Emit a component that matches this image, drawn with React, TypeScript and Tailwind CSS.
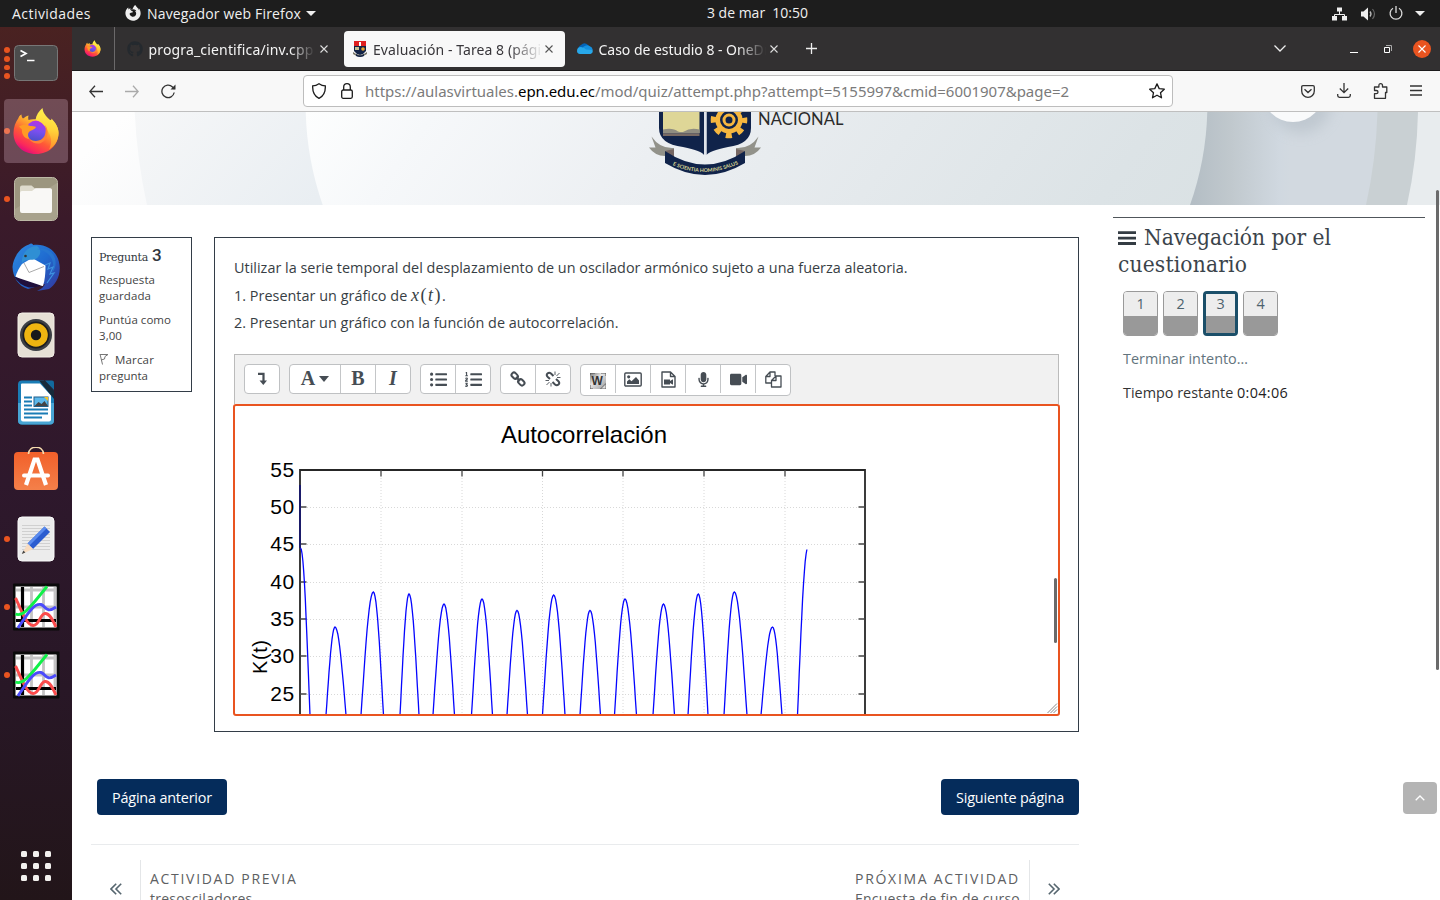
import { useLayoutEffect, useRef, type ReactNode } from "react";
import { FaFirefoxBrowser, FaGithub, FaListUl, FaListOl, FaMicrophone, FaVideo } from "react-icons/fa";

/* Text run tracked so that it spans exactly w pixels. */
function Fit({ w, className = "", children }: { w: number; className?: string; children: ReactNode }) {
  const ref = useRef<HTMLSpanElement>(null);
  useLayoutEffect(() => {
    const el = ref.current;
    if (!el) return;
    el.style.letterSpacing = "0px";
    const n = (el.textContent || "").length;
    el.style.letterSpacing = `${(w - el.getBoundingClientRect().width) / n}px`;
  }, [w]);
  return (
    <span ref={ref} className={`inline-block whitespace-pre ${className}`}>
      {children}
    </span>
  );
}

function FirefoxLogo({ size, id }: { size: number; id: string }) {
  return (
    <svg width={size} height={size} viewBox="0 0 48 48">
      <defs>
        <linearGradient id={`${id}a`} x1="0.8" y1="0.1" x2="0.25" y2="0.95">
          <stop offset="0" stopColor="#fff44f" />
          <stop offset="0.3" stopColor="#ffb02e" />
          <stop offset="0.6" stopColor="#ff5a36" />
          <stop offset="0.85" stopColor="#fb2a5a" />
          <stop offset="1" stopColor="#e00b7e" />
        </linearGradient>
        <linearGradient id={`${id}b`} x1="0.6" y1="0" x2="0.4" y2="1">
          <stop offset="0" stopColor="#b833e1" />
          <stop offset="0.5" stopColor="#7a4ff0" />
          <stop offset="1" stopColor="#4a50c8" />
        </linearGradient>
        <linearGradient id={`${id}c`} x1="0.5" y1="0" x2="0.4" y2="1">
          <stop offset="0" stopColor="#fff44f" />
          <stop offset="0.5" stopColor="#ffd43a" />
          <stop offset="1" stopColor="#ff8a2a" />
        </linearGradient>
      </defs>
      <path d="M24 47C10.500 47 1.500 37.500 1.500 26C1.500 20 3.500 15 6.500 11C6.500 10 7.500 8.500 9.500 7.500C9.500 9.500 10 10.500 11 11.500C12.500 10.500 14.500 9 16.500 8.500C16 10 16 11.500 16.500 13C20 11.500 26 12 30 14L40 13C43 16 46.500 20 46.500 26C46.500 37.500 37.500 47 24 47Z" fill={`url(#${id}a)`} />
      <circle cx="24.500" cy="24" r="10.500" fill={`url(#${id}b)`} />
      <path d="M23.500 13C24 8 27 4 30.500 1C31 6 34 9 37.500 12.500C38.500 13.500 39.500 13.500 39.500 11.500C43 15 46.500 20 46.500 26C46.500 33 43 39 37 42.500C41 35 39 28 34.500 22C32 17 28 14 23.500 13Z" fill={`url(#${id}c)`} />
      <path d="M7 19.500C11 17 15 17.500 18 19C20.500 19 22.500 19 24 20C22.500 23 19.500 23 17.500 24.500C15.500 26 15.500 30 18 32C11.500 32 9.500 26 10 22.500Z" fill="#ff9b25" />
      <path d="M33 18C37 23 37 32 29 36C25 37.500 20 36 17 32C23 35.500 30 34 32.500 29C34 25.500 34 21 33 18Z" fill="#ff8236" />
    </svg>
  );
}

function GnuplotIcon() {
  return (
    <svg width="48" height="48" viewBox="0 0 48 48">
      <rect x="1" y="0.500" width="46.500" height="47" rx="1" fill="#0a0a0a" />
      <rect x="3.500" y="3.500" width="41" height="41" fill="#fff" />
      <path d="M4 7h40M4 24h40M19.500 4v40M31.500 4v40M43 4v40" stroke="#c4c4c4" strokeWidth="2.800" />
      <path d="M4 37.500h40M10.500 4v40" stroke="#000" strokeWidth="3.200" />
      <path d="M3.500 15C9 26 14 42 21 42.500C27 43 28 31 33 30.500C38 30 41 38 44 44" fill="none" stroke="#fb4b4b" strokeWidth="2.900" />
      <path d="M3.500 31C12 35 22 19 35 3.500" fill="none" stroke="#10f048" strokeWidth="2.900" />
      <path d="M6 45C16 30 22 20 29 21.500C34 23 34 31 44 24" fill="none" stroke="#4b4bfb" strokeWidth="2.900" />
    </svg>
  );
}

const dock: { name: string; dots: number; active?: boolean; icon: ReactNode }[] = [
  {
    name: "Terminal", dots: 4,
    icon: (
      <svg width="48" height="48" viewBox="0 0 48 48">
        <rect x="2.500" y="6.500" width="43" height="35" rx="4" fill="#4c4c4c" stroke="#777" />
        <path d="M8.500 11.500l5.500 3-5.500 3" fill="none" stroke="#fff" strokeWidth="1.700" />
        <path d="M15 21.500h7.500" stroke="#fff" strokeWidth="1.500" />
      </svg>
    ),
  },
  { name: "Firefox", dots: 1, active: true, icon: <FirefoxLogo size={48} id="ffdock" /> },
  {
    name: "Archivos", dots: 1,
    icon: (
      <svg width="48" height="48" viewBox="0 0 48 48">
        <rect x="2.500" y="2.500" width="43" height="43" rx="5" fill="#9c967f" stroke="#bdb9a6" />
        <path d="M3 34L45 8V40a5 5 0 0 1-5 5H8a5 5 0 0 1-5-5z" fill="#a8a28c" />
        <path d="M8 15v-2.500a2 2 0 0 1 2-2h9.500l3.500 3h15a2 2 0 0 1 2 2V20H8z" fill="#dedbcd" />
        <path d="M8 18a2 2 0 0 1 2-2h10l3.500-2.700h14.500a2 2 0 0 1 2 2V36a2 2 0 0 1-2 2H10a2 2 0 0 1-2-2z" fill="#f9f8f6" />
      </svg>
    ),
  },
  {
    name: "Thunderbird", dots: 0,
    icon: (
      <svg width="48" height="48" viewBox="0 0 48 48">
        <defs>
          <linearGradient id="tb" x1="0" y1="0" x2="1" y2="1">
            <stop offset="0" stopColor="#2f8ae0" />
            <stop offset="0.5" stopColor="#1f6bd0" />
            <stop offset="1" stopColor="#35359c" />
          </linearGradient>
        </defs>
        <path d="M0.500 24C1 15 8 4 17 1.500C19 -0.500 21 0.500 21 2C34 0 46 8 47.500 22C49 33 43 42 37 46L25 48C29 46 32 44 33 41L16 46C6 43 1 34 0.500 24Z" fill="url(#tb)" />
        <path d="M10 21L20 15L33.500 22.500C33.500 30 33 37 31 43C24 42 10 38 3.500 33.500C5 29 7 25 10 21Z" fill="#fff" />
        <path d="M2 33.500L29 42.500Q24 45 17 44.500Q7 42 2 33.500Z" fill="#20103c" />
        <path d="M12 20l5 9.500 15-6" fill="none" stroke="#aaa" />
        <path d="M10 20C9 11 16 3 25 3C31 7 28 15 22 16.500C18 17 13 16 10 20Z" fill="#2f8fd4" />
        <path d="M25 6C38 8 44 18 40 30C45 24 45 15 39 9Q33 4 25 6Z" fill="#2878cf" opacity="0.800" />
        <path d="M33 22l5-2-2 6 5-2-3 7 4-1-7 10" fill="none" stroke="#3e93e0" strokeWidth="1.200" />
        <circle cx="13.500" cy="13" r="1.300" fill="#333" />
      </svg>
    ),
  },
  {
    name: "Rhythmbox", dots: 0,
    icon: (
      <svg width="48" height="48" viewBox="0 0 48 48">
        <rect x="6" y="2" width="36" height="44" rx="4" fill="#e6e0d5" stroke="#f3efe7" />
        <circle cx="24" cy="24" r="16" fill="#3c3f44" />
        <circle cx="24" cy="24" r="13.500" fill="#1d1e20" />
        <circle cx="24" cy="24" r="11.800" fill="#eeb511" />
        <circle cx="24" cy="24" r="5.200" fill="#17191b" />
      </svg>
    ),
  },
  {
    name: "Writer", dots: 0,
    icon: (
      <svg width="48" height="48" viewBox="0 0 48 48">
        <path d="M10 1.500h22l10 11v29a4 4 0 0 1-4 4H10a4 4 0 0 1-4-4V5.500a4 4 0 0 1 4-4z" fill="#1a7cb5" />
        <path d="M6 24h36v17.500a4 4 0 0 1-4 4H10a4 4 0 0 1-4-4z" fill="#48a5d4" />
        <path d="M10 4.500h18l11 12v24a2 2 0 0 1-2 2H11a2 2 0 0 1-2-2v-35a1 1 0 0 1 1-1z" fill="#fff" />
        <path d="M27 1.500h6L42 12v8z" fill="#172a3a" />
        <path d="M33 1.500h7a2 2 0 0 1 2 2V11z" fill="#126a9f" />
        <path d="M12 18.500h8M12 22.500h8M12 26.500h8M12 30.500h24M12 34.500h24M12 38.500h18" stroke="#1a7cb5" strokeWidth="1.800" />
        <rect x="22" y="18" width="14" height="9.500" fill="#5cb8ea" stroke="#1e5f8a" />
        <path d="M22.500 27l4-4 3 2 3-3 3.500 5z" fill="#444" />
        <path d="M32 18h4v4z" fill="#f5c324" />
      </svg>
    ),
  },
  {
    name: "Software", dots: 0,
    icon: (
      <svg width="48" height="48" viewBox="0 2 48 48">
        <defs>
          <linearGradient id="sw" x1="0" y1="0" x2="0" y2="1">
            <stop offset="0" stopColor="#f2602a" />
            <stop offset="1" stopColor="#f4804a" />
          </linearGradient>
        </defs>
        <rect x="2" y="7" width="44" height="38" rx="4" fill="url(#sw)" />
        <path d="M16.500 9C17 0 31 0 31.500 9" fill="none" stroke="#f6dcae" strokeWidth="1.700" />
        <path d="M14 40L22.500 14.500h3L34 40" fill="none" stroke="#fff" strokeWidth="4.200" />
        <path d="M12 30.500h24" stroke="#fff" strokeWidth="4" strokeLinecap="round" />
      </svg>
    ),
  },
  {
    name: "Editor de textos", dots: 1,
    icon: (
      <svg width="48" height="48" viewBox="0 0 48 48">
        <rect x="6" y="2" width="36" height="44" rx="4" fill="#ececec" stroke="#fafafa" />
        <path d="M10 10.500h28M10 13.500h28M10 16.500h28M10 19.500h28M10 22.500h28M10 25.500h28M10 28.500h28M10 31.500h28M10 34.500h28" stroke="#c9c9c9" strokeWidth="0.800" />
        <path d="M32.500 11.500l5.500 5.500-17 17-5.500-5.500z" fill="#2a5cd0" />
        <path d="M32.500 11.500l2 2-17 17-2-2z" fill="#5a8bee" />
        <path d="M15.500 28.500l5.500 5.500-11 5z" fill="#f8dcc0" />
        <path d="M11.400 35.500l2 2-3.600 1.500z" fill="#444" />
      </svg>
    ),
  },
  { name: "gnuplot 1", dots: 1, icon: <GnuplotIcon /> },
  { name: "gnuplot 2", dots: 1, icon: <GnuplotIcon /> },
];

function Dock() {
  return (
    <aside className="flex w-[72px] shrink-0 flex-col gap-1 bg-[linear-gradient(180deg,#4a2221_0%,#3a1a2a_22%,#2e182c_52%,#281726_76%,#221519_100%)] pt-1 pb-0.5">
      {dock.map((d) => (
        <div key={d.name} className="flex h-16 items-center">
          <div className="flex w-3 flex-col items-end gap-[3px] pr-[2px]">
            {Array.from({ length: d.dots }, (_, i) => (
              <span key={i} className="size-[5.7px] rounded-full bg-[#e95420]" />
            ))}
          </div>
          <div className={`-ml-2 flex h-16 w-16 items-center justify-center rounded ${d.active ? "bg-[#f6d5e8]/25" : ""}`}>{d.icon}</div>
        </div>
      ))}
      <div className="mt-auto flex h-16 items-center justify-center">
        <div className="grid grid-cols-3 gap-1.5">
          {Array.from({ length: 9 }, (_, i) => (
            <span key={i} className="size-1.5 rounded-[1.500px] bg-[#f2f0ee]" />
          ))}
        </div>
      </div>
    </aside>
  );
}

function TopBar() {
  return (
    <header className="flex h-[27px] shrink-0 items-center bg-[#1d1d1d] text-[14px] text-[#f0f0f0]">
      <div className="w-[113px] pl-3 leading-none"><Fit w={79}>Actividades</Fit></div>
      <FaFirefoxBrowser className="ml-3 size-4 -translate-y-px" />
      <div className="ml-1.5 w-[155px] leading-none"><Fit w={154}>Navegador web Firefox</Fit></div>
      <svg className="ml-1" width="10" height="5" viewBox="0 0 10 5"><path d="M0 0h10L5 5z" fill="#eee" /></svg>
      <div className="ml-[391px] leading-none"><Fit w={101} className="-translate-y-px">3 de mar  10:50</Fit></div>
      <svg className="ml-auto" width="15" height="14" viewBox="0 0 15 14">
        <path d="M5 0.500h5v4H5zM0 9h5v4.500H0zM10 9h5v4.500h-5z" fill="#eee" />
        <path d="M7.500 4v3.500M2.500 9.500v-2h10v2" stroke="#eee" fill="none" />
      </svg>
      <svg className="ml-[14px]" width="15" height="14" viewBox="0 0 15 14">
        <path d="M0 4.500h2.500L7 0.500v13L2.500 9.500H0z" fill="#eee" />
        <path d="M9 4.500q2 2.500 0 5" stroke="#bbb" fill="none" strokeWidth="1.300" />
        <path d="M11.500 2q4 5 0 10" stroke="#666" fill="none" strokeWidth="1.200" />
      </svg>
      <svg className="ml-[13px] -translate-y-px" width="14" height="14" viewBox="0 0 14 14">
        <path d="M4 2.200A5.900 5.900 0 1 0 10 2.200M7 0v7" stroke="#ddd" fill="none" strokeWidth="1.300" />
      </svg>
      <svg className="mr-[15px] ml-3" width="10" height="5" viewBox="0 0 10 5"><path d="M0 0h10L5 5z" fill="#eee" /></svg>
    </header>
  );
}

function Close({ color }: { color: string }) {
  return <svg width="8" height="8" viewBox="0 0 8 8"><path d="M0.500 0.500l7 7M7.500 0.500l-7 7" stroke={color} strokeWidth="1.100" /></svg>;
}

function Tabs() {
  return (
    <div className="flex h-11 shrink-0 items-center border-b border-[#1c1b1c] bg-[#323031] text-[14px] text-[#f4f4f4]">
      <div className="flex h-full w-[43px] items-center justify-center border-r border-[#6b696a] pr-[2px]"><FirefoxLogo size={17} id="fftab" /></div>
      <div className="flex w-[229px] items-center">
        <FaGithub className="ml-3 size-4 text-[#24292e]" />
        <div className="ml-[5.5px] w-[166px] overflow-hidden pt-0.5 [mask-image:linear-gradient(90deg,#000_85%,transparent_100%)]"><Fit w={165}>progra_cientifica/inv.cpp</Fit></div>
        <span className="ml-[5.500px]"><Close color="#ddd" /></span>
      </div>
      <div className="flex h-9 w-[221px] items-center rounded bg-[#f8f8f8] text-[#38363a]">
        <svg className="ml-[9px]" width="14" height="16" viewBox="0 0 14 16">
          <path d="M1 0h12v5H1z" fill="#df2020" />
          <path d="M6 1h2v4H6z" fill="#fff" />
          <path d="M1 5h12v5q-2 3-6 4q-4-1-6-4z" fill="#122345" />
          <path d="M2 6h4v3H2z" fill="#c5bf91" /><circle cx="10" cy="8" r="1.800" fill="#e8a32e" />
          <path d="M0 11q7 6 14 0v2q-7 5-14 0z" fill="#777568" /><path d="M3 13q4 3 8 0v2q-4 2-8 0z" fill="#122345" />
        </svg>
        <div className="ml-[6px] w-[170px] overflow-hidden pt-0.5 [mask-image:linear-gradient(90deg,#000_80%,transparent_100%)]"><Fit w={177}>Evaluación - Tarea 8 (págin</Fit></div>
        <span className="ml-[2px]"><Close color="#555" /></span>
      </div>
      <div className="flex w-[225px] items-center">
        <svg className="ml-3" width="16" height="11" viewBox="0 0 16 11">
          <path d="M2 8a4 4 0 0 1 2-6q4-4 8 1l-8 6z" fill="#0364b8" />
          <path d="M6 4q4-3 6.500-1q3 1 3.300 4L7 9z" fill="#1490df" />
          <path d="M0 8q0-4 4-4q3 0 5 2.500L15.500 7q1 3-2 4H3q-3-.5-3-3z" fill="#28a8ea" />
        </svg>
        <div className="ml-[5.5px] w-[167px] overflow-hidden pt-0.5 [mask-image:linear-gradient(90deg,#000_83%,transparent_100%)]"><Fit w={171}>Caso de estudio 8 - OneDr</Fit></div>
        <span className="ml-[4.5px]"><Close color="#ddd" /></span>
      </div>
      <svg className="ml-[16px]" width="11" height="11" viewBox="0 0 11 11"><path d="M5.500 0v11M0 5.500h11" stroke="#eee" strokeWidth="1.300" /></svg>
      <svg className="ml-auto" width="12" height="7" viewBox="0 0 12 7"><path d="M0.500 0.500L6 6l5.500-5.500" stroke="#eee" strokeWidth="1.300" fill="none" /></svg>
      <svg className="mt-1.5 ml-16" width="8" height="2" viewBox="0 0 8 2"><path d="M0 1.500h8" stroke="#fff" /></svg>
      <svg className="ml-[26px]" width="8" height="8" viewBox="0 0 8 8"><path d="M0.500 2.500h5v5h-5z" stroke="#fff" fill="none" /><path d="M2 .5h5.500V6" stroke="#aaa" fill="none" /></svg>
      <div className="mr-[9px] ml-[21px] flex size-[18px] items-center justify-center rounded-full bg-[#e95420]"><Close color="#fff" /></div>
    </div>
  );
}

function NavBar() {
  return (
    <div className="flex h-[41px] shrink-0 items-center border-b border-[#bfbfbf] bg-[#f8f8f8]">
      <svg className="ml-[17px]" width="14" height="13" viewBox="0 0 14 13"><path d="M6 .8L.8 6.500L6 12.200M1 6.500h13" stroke="#333" strokeWidth="1.300" fill="none" /></svg>
      <svg className="ml-[22px]" width="14" height="13" viewBox="0 0 14 13"><path d="M8 .8l5.200 5.700L8 12.200M13 6.500H0" stroke="#aaa" strokeWidth="1.300" fill="none" /></svg>
      <svg className="ml-[22px]" width="15" height="15" viewBox="0 0 15 15"><path d="M13.200 8.500A6.200 6.200 0 1 1 11.500 3L13.500 5" stroke="#333" strokeWidth="1.300" fill="none" /><path d="M14.500 .5v5h-5z" fill="#333" /></svg>
      <div className="ml-[127px] flex h-8 w-[870px] items-center rounded border border-[#bdbdbd] bg-white text-[15px] text-[#7b7b7b]">
        <svg className="ml-2" width="14" height="16" viewBox="0 0 14 16"><path d="M7 .7q3 2 6.300 2.200Q13.800 12 7 15.300Q.2 12 .7 2.900Q4 2.700 7 .7z" stroke="#1b1b1b" strokeWidth="1.300" fill="none" /></svg>
        <svg className="ml-[15px]" width="12" height="16" viewBox="0 0 12 16"><rect x=".7" y="7" width="10.600" height="8.300" rx="1.500" stroke="#1b1b1b" strokeWidth="1.300" fill="none" /><path d="M2.700 7V4q0-3.300 3.300-3.300T9.300 4v3" stroke="#1b1b1b" strokeWidth="1.300" fill="none" /></svg>
        <div className="ml-3 pt-px whitespace-pre"><Fit w={153}>https://aulasvirtuales.</Fit><Fit w={77} className="text-black">epn.edu.ec</Fit><Fit w={474}>/mod/quiz/attempt.php?attempt=5155997&amp;cmid=6001907&amp;page=2</Fit></div>
        <svg className="mr-[7px] ml-auto" width="16" height="16" viewBox="0 0 16 16"><path d="M8 .9l2.200 4.700 5.100.6-3.800 3.500 1 5.100L8 12.200l-4.500 2.600 1-5.100L.7 6.200l5.100-.6z" stroke="#1b1b1b" strokeWidth="1.300" fill="none" strokeLinejoin="round" /></svg>
      </div>
      <svg className="ml-auto" width="14" height="13" viewBox="0 0 14 13"><path d="M2 .7h10q1.300 0 1.300 1.300v4A6.300 6.300 0 0 1 .7 6V2Q.7.7 2 .7zM3.500 4.200L7 7.500l3.500-3.300" stroke="#333" strokeWidth="1.300" fill="none" /></svg>
      <svg className="ml-[22px] -translate-y-px" width="14" height="15" viewBox="0 0 14 15"><path d="M7 0v9.500M2.800 5.500L7 9.700l4.200-4.200M.7 11v1.500q0 1.800 1.800 1.800h9q1.800 0 1.800-1.800V11" stroke="#333" strokeWidth="1.300" fill="none" /></svg>
      <svg className="ml-[22px]" width="15" height="16" viewBox="0 0 15 16"><path d="M1.500 15.300h11V9.500h1.300V4H9.500V2.500Q9.500.7 7.700.7T5.900 2.500V4H1.500v3.500h1.800q1.700 0 1.700 1.600t-1.700 1.600H1.500z" stroke="#333" strokeWidth="1.300" fill="none" strokeLinejoin="round" /></svg>
      <svg className="mr-[18px] ml-[22px] -translate-y-px" width="12" height="11" viewBox="0 0 12 11"><path d="M0 1h12M0 5.500h12M0 10h12" stroke="#333" strokeWidth="1.300" /></svg>
    </div>
  );
}

function Banner() {
  return (
    <svg className="block shrink-0" width="1368" height="93" viewBox="72 112 1368 93">
      <defs>
        <linearGradient id="b0" x1="72" y1="112" x2="160" y2="205" gradientUnits="userSpaceOnUse"><stop offset="0.300" stopColor="#fefefe" /><stop offset="1" stopColor="#f8f9fa" /></linearGradient>
        <linearGradient id="b1" x1="135" y1="112" x2="280" y2="240" gradientUnits="userSpaceOnUse"><stop offset="0" stopColor="#f6f7f8" /><stop offset="1" stopColor="#e9eef2" /></linearGradient>
        <linearGradient id="b2" x1="306" y1="112" x2="1010" y2="620" gradientUnits="userSpaceOnUse"><stop offset="0" stopColor="#fdfefe" /><stop offset="0.120" stopColor="#f6f8fa" /><stop offset="0.350" stopColor="#eceff2" /><stop offset="0.800" stopColor="#dce3e6" /><stop offset="1" stopColor="#d8e0e2" /></linearGradient>
        <linearGradient id="b3" x1="1190" y1="0" x2="1290" y2="0" gradientUnits="userSpaceOnUse"><stop offset="0" stopColor="#b3bdc4" /><stop offset="0.400" stopColor="#c0c8cd" /><stop offset="0.900" stopColor="#d0d8e0" /><stop offset="1" stopColor="#d2d9e0" /></linearGradient>
        <filter id="bs" x="-1" y="-1" width="3" height="3"><feGaussianBlur stdDeviation="7" /></filter>
        <clipPath id="bc"><rect x="72" y="112" width="1368" height="93" /></clipPath>
      </defs>
      <g clipPath="url(#bc)">
        <rect x="72" y="112" width="1368" height="93" fill="url(#b0)" />
        <path d="M134.700 112Q137 160 147 205H400V112z" fill="url(#b1)" />
        <path d="M1100 112h340v93h-340z" fill="#e8ecee" />
        <path d="M1100 112h318Q1417 160 1407 205h-307z" fill="#c9d0d3" />
        <path d="M1100 112h277.500Q1376 160 1366 205h-266z" fill="url(#b3)" />
        <path d="M305.700 112Q307 160 322.700 205H1190Q1206 160 1207.300 112z" fill="url(#b2)" />
        <circle cx="1301" cy="103" r="30" fill="#9da9b3" opacity="0.350" filter="url(#bs)" />
        <circle cx="1293" cy="91" r="31" fill="#f9fafb" />
        <path d="M659 105h45v50Q702 151 683 147Q659 144 659 128z" fill="#10234a" />
        <path d="M706.500 105h44.500v23Q751 144 728 147Q709 151 706.500 155z" fill="#10234a" />
        <path d="M704 105h2.500v50H704z" fill="#dfe3ea" />
        <path d="M663 105h36.500v28H663z" fill="#ded697" />
        <path d="M663 129.500q10-2 15 2q4 1 6 0q6-4 15.500-2v4H663z" fill="#8f8d81" /><path d="M663 133.500h36.500v2.500H663z" fill="#786a64" />
        <circle cx="729" cy="120" r="11.300" fill="none" stroke="#f6b73f" strokeWidth="4.600" />
        <circle cx="729" cy="120" r="15.500" fill="none" stroke="#f6b73f" strokeWidth="5.600" strokeDasharray="6.090 6.090" strokeDashoffset="3.040" />
        <circle cx="729" cy="120" r="5" fill="none" stroke="#f6b73f" strokeWidth="3" />
        <path d="M651.500 136.500Q660 149 674 148v12l-9-4q-10 0-16-8.500h6.500zM758.500 136.500Q750 149 736 148v12l9-4q10 0 16-8.500h-6.500z" fill="#92928a" />
        <path d="M665 151l9-2v9zM745 151l-9-2v9z" fill="#756663" />
        <path d="M665 151Q705 178 745 151v12Q705 187 665 163z" fill="#10234a" />
        <path id="motto" d="M672.500 165Q705 180 740.500 163" fill="none" />
        <text className="font-['Lato',sans-serif] text-[5.200px] font-bold" fill="#d9d393"><textPath href="#motto" textLength="68">E SCIENTIA HOMINIS SALUS</textPath></text>
        <text x="758" y="125" textLength="85.500" className="font-['Lato',sans-serif] text-[16.500px]" fill="#2a2a2a">NACIONAL</text>
      </g>
    </svg>
  );
}

const peaks: [number, number, number, number][] = [
  [300.5, 548, 300.5, 310], [335, 627, 326, 346], [373.3, 592, 361, 383.5], [409, 594, 400, 419], [444, 604, 433, 454.5],
  [482, 599, 471.5, 492.5], [517, 610.5, 507, 527.5], [553.7, 595, 542.5, 565], [590, 610.5, 580, 600.5], [625, 599, 614.5, 636.5],
  [663.5, 604, 653, 674.5], [698.3, 594, 688, 708], [734.3, 592, 724, 747], [772.5, 627, 761, 782], [807.8, 548, 797.5, 807.8],
];

function hump([x, y, l, r]: [number, number, number, number]) {
  const pts: string[] = [];
  const k = 1.75;
  for (let i = -12; i <= 12; i++) {
    const t = i / 12;
    const half = t < 0 ? x - l : r - x;
    if (half === 0) continue;
    const py = y + ((715 - y) * (1 - Math.cos(t * k))) / (1 - Math.cos(k));
    pts.push(`${(x + t * half).toFixed(1)},${py.toFixed(1)}`);
  }
  return pts.join(" ");
}

const cols = [381, 462, 542.5, 623, 704, 785];
const rows: [number, number][] = [[55, 470], [50, 507], [45, 544], [40, 582], [35, 619], [30, 656], [25, 694]];

function Chart() {
  return (
    <svg className="block" width="823" height="308" viewBox="235 406 823 308">
      <g className="font-['Liberation_Sans',sans-serif]" fill="#000">
        <text x="501" y="443" fontSize="24" textLength="166">Autocorrelación</text>
        {rows.map(([v, y]) => <text key={v} x="270.300" y={y + 7} fontSize="21" textLength="23.800">{v}</text>)}
        <text transform="translate(267 674) rotate(-90)" fontSize="20" textLength="34">K(t)</text>
      </g>
      <g stroke="#d8d8d8" strokeDasharray="1 2">
        {cols.map((x) => <path key={x} d={`M${x} 478V714`} />)}
        {rows.slice(1).map(([v, y]) => <path key={v} d={`M307 ${y}.5H858`} />)}
      </g>
      <path d="M300 714V470H865V714" fill="none" stroke="#262626" strokeWidth="1.800" />
      <g stroke="#444" strokeWidth="1.300">
        {cols.map((x) => <path key={x} d={`M${x} 470v6.500`} />)}
        {rows.slice(1).map(([v, y]) => <path key={v} d={`M300 ${y}h6.500M858.500 ${y}h6.500`} />)}
      </g>
      <path d="M300 485V548" stroke="#11117a" strokeWidth="1.500" />
      {peaks.map((p) => <polyline key={p[0]} points={hump(p)} fill="none" stroke="#0505ff" strokeWidth="1.300" />)}
      <path d="M1047.500 713l9.500-9.500M1050.500 713l6.500-6.500M1053.500 713l3.500-3.500" stroke="#888" strokeWidth="1" />
    </svg>
  );
}

function Group({ children, tall }: { children: ReactNode; tall?: boolean }) {
  return <div className={`flex items-start divide-x divide-[#c4c6c8] rounded border border-[#bfc1c3] bg-white ${tall ? "h-8" : "h-[30px]"}`}>{children}</div>;
}
function Cell({ children, wide, tall }: { children: ReactNode; wide?: boolean; tall?: boolean }) {
  return <div className={`flex h-7 items-center justify-center ${tall ? "pt-0.5" : ""} ${wide ? "w-[51px] gap-1" : "w-[35px] last:w-[34px]"}`}>{children}</div>;
}

function Toolbar() {
  return (
    <div className="flex h-[50px] items-start gap-[9px] border-x border-t border-[#bbb] bg-[#f1f1f1] pt-[9px] pl-[9px] text-[#464d54]">
      <Group><Cell><svg width="9" height="14" viewBox="0 0 9 14"><path d="M0 1.800h5.500V9" stroke="currentColor" strokeWidth="2.200" fill="none" /><path d="M1.500 8.500h7.500L5.300 13z" fill="currentColor" /></svg></Cell></Group>
      <Group>
        <Cell wide><span className="font-['Liberation_Serif',serif] text-[20px] font-bold">A</span><svg width="10" height="6" viewBox="0 0 10 6"><path d="M0 0h10L5 6z" fill="currentColor" /></svg></Cell>
        <Cell><span className="font-['Liberation_Serif',serif] text-[20px] font-bold">B</span></Cell>
        <Cell><span className="font-['Liberation_Serif',serif] text-[20px] font-bold italic">I</span></Cell>
      </Group>
      <Group><Cell><FaListUl className="size-[17px]" /></Cell><Cell><FaListOl className="size-[17px]" /></Cell></Group>
      <Group>
        <Cell>
          <svg width="16" height="16" viewBox="0 0 16 16" fill="none" stroke="currentColor" strokeWidth="2">
            <rect x="-3.400" y="-2.400" width="6.800" height="4.800" rx="2.200" transform="translate(4.700 4.700) rotate(45)" />
            <rect x="-3.400" y="-2.400" width="6.800" height="4.800" rx="2.200" transform="translate(11.300 11.300) rotate(45)" />
            <path d="M6 6l4 4" />
          </svg>
        </Cell>
        <Cell>
          <svg width="16" height="16" viewBox="0 0 16 16" fill="none" stroke="currentColor" strokeWidth="2">
            <path d="M5 8L2.800 6Q.8 4 2.500 2.500T6 2.500L8.500 5" />
            <path d="M11 8l2.200 2q2 2 .3 3.500T10 13.500L7.500 11" />
            <path d="M10 .5v3.500M14.500 2l-3 3M15.500 6.500H12M6 12v3.500M4.500 11l-3 3M4 9.500H.5" strokeWidth="0.900" />
          </svg>
        </Cell>
      </Group>
      <Group tall>
        <Cell tall><svg className="mt-0.5" width="16" height="16" viewBox="0 0 16 16"><defs><linearGradient id="wg" x1="0" y1="0" x2="1" y2="1"><stop offset="0" stopColor="#777" /><stop offset=".4" stopColor="#e5e5e5" /><stop offset="1" stopColor="#999" /></linearGradient></defs><rect width="16" height="16" fill="url(#wg)" /><path d="M0 2V0h5M11 0h5v3M16 12v4h-4M0 12v4h3" fill="none" stroke="#555" strokeWidth="1" /><text x="1.500" y="12" className="font-['Liberation_Sans',sans-serif] text-[12px] font-bold" fill="#333">W</text><path d="M16 10.500v5.500h-5.500z" fill="#ddd" stroke="#444" strokeWidth=".7" /></svg></Cell>
        <Cell><svg width="18" height="15" viewBox="0 0 18 15"><rect x=".8" y="1" width="16.400" height="13" rx="1" fill="none" stroke="currentColor" strokeWidth="1.400" /><circle cx="4.700" cy="4.800" r="1.600" fill="currentColor" /><path d="M3 12V9.500l2.300-2.300L7.500 9.300 12 5l3 3.500V12z" fill="currentColor" /></svg></Cell>
        <Cell><svg width="15" height="17" viewBox="0 0 15 17"><path d="M1 1h8.500L14 5.500V16H1zM9.500 1v4.500H14" fill="none" stroke="currentColor" strokeWidth="1.400" strokeLinejoin="round" /><path d="M3 8.500h6V10l3-1.800v5.500L9 12v1.500H3z" fill="currentColor" /></svg></Cell>
        <Cell><FaMicrophone className="size-[15px]" /></Cell>
        <Cell><FaVideo className="size-[17px]" /></Cell>
        <Cell><svg width="17" height="17" viewBox="0 0 17 17"><path d="M6 12H.8V5.500L5 1h5v4M.8 5.500H5V1M6.500 16V9.500L11 5h5v11zM6.500 9.500H11V5" fill="none" stroke="currentColor" strokeWidth="1.300" strokeLinejoin="round" /></svg></Cell>
      </Group>
    </div>
  );
}

function QuestionInfo() {
  return (
    <section className="h-[155px] w-[101px] shrink-0 border border-[#333d47] pt-[7px] pl-[7px] text-[11.500px] leading-4 text-[#444]">
      <div className="flex h-5 items-baseline gap-1 whitespace-nowrap text-[#31373d]"><Fit w={49} className="font-['DejaVu_Serif',serif] text-[11px]">Pregunta</Fit><b className="font-['Roboto',sans-serif] text-[17px] leading-5 font-medium">3</b></div>
      <div className="mt-[7px]"><Fit w={56}>Respuesta</Fit><br /><Fit w={52}>guardada</Fit></div>
      <div className="mt-2"><Fit w={72}>Puntúa como</Fit><br /><Fit w={23}>3,00</Fit></div>
      <div className="mt-2">
        <span className="flex items-center"><svg className="-translate-y-px" width="10" height="12" viewBox="0 0 10 12"><path d="M1 1l2.500 10.500M1 1.500h8L6 3.500l-.5 2.500-3.500 1" fill="none" stroke="#777" /></svg><Fit w={39} className="ml-1.5">Marcar</Fit></span>
        <Fit w={49}>pregunta</Fit>
      </div>
    </section>
  );
}

function Activity({ title, sub, next }: { title: string; sub: string; next?: boolean }) {
  const arrow = <svg width="12" height="12" viewBox="0 0 12 12" className={next ? "-translate-x-px translate-y-px" : "translate-y-px -scale-x-100"}><path d="M.8.800L6 6L.8 11.200M5.800.800L11 6l-5.200 5.200" fill="none" stroke="#56666f" strokeWidth="1.600" /></svg>;
  return (
    <div className={`flex h-14 text-[14px] leading-[19px] text-[#5d6062] ${next ? "flex-row-reverse text-right" : ""}`}>
      <div className={`flex w-[50px] items-center justify-center ${next ? "border-l" : "border-r"} border-[#e4e6e8]`}>{arrow}</div>
      <div className="mx-[9px] pt-[9px]">
        <div className="h-5"><Fit w={next ? 165 : 147.5}>{title}</Fit></div>
        <div><Fit w={next ? 165 : 102.5}>{sub}</Fit></div>
      </div>
    </div>
  );
}

function Main() {
  return (
    <main className="flex w-[988px] flex-col pt-8">
      <div className="flex justify-between">
        <QuestionInfo />
        <section className="h-[495px] w-[865px] border border-[#333d47] px-[19px] pt-[16px] text-[14.400px] leading-[27.500px] text-[#373e44]">
          <div><Fit w={673.5}>Utilizar la serie temporal del desplazamiento de un oscilador armónico sujeto a una fuerza aleatoria.</Fit></div>
          <div className="flex h-[27px] items-baseline whitespace-pre"><Fit w={177}>1. Presentar un gráfico de </Fit><Fit w={31} className="font-['Liberation_Serif',serif] text-[18px] leading-none"><i>x</i>(<i>t</i>)</Fit>.</div>
          <div><Fit w={384.5}>2. Presentar un gráfico con la función de autocorrelación.</Fit></div>
          <div className="mt-[18px] w-[825px]">
            <Toolbar />
            <div className="relative -mx-px h-[312px] w-[827px] overflow-hidden rounded-[3px] border-2 border-[#e95420] bg-white">
              <Chart />
              <span className="absolute top-[172px] right-px h-[65px] w-[3px] rounded-full bg-[#6a6a6a]" />
            </div>
          </div>
        </section>
      </div>
      <div className="mt-[47px] flex justify-between pl-[6px] text-[14.400px] text-white">
        <div className="flex h-9 w-[130px] items-center justify-center rounded bg-[#052c5b] pt-0.5"><Fit w={100}>Página anterior</Fit></div>
        <div className="flex h-9 w-[138px] items-center justify-center rounded bg-[#052c5b] pt-0.5"><Fit w={108}>Siguiente página</Fit></div>
      </div>
      <div className="mt-[29px] flex justify-between border-t border-[#e9ebed] pt-[15px]">
        <Activity title="ACTIVIDAD PREVIA" sub="tresosciladores" />
        <Activity title="PRÓXIMA ACTIVIDAD" sub="Encuesta de fin de curso" next />
      </div>
    </main>
  );
}

function Sidebar() {
  return (
    <aside className="mt-3 ml-[34px] w-[312px] self-start border-t border-[#50565b] pl-[5px] text-[14.400px] text-[#333]">
      <h2 className="mt-[6px] font-['DejaVu_Serif_Condensed','DejaVu_Serif',serif] text-[22.500px] leading-[27px] text-[#3b444b]">
        <span className="flex items-center"><svg width="18" height="14" viewBox="0 0 18 14"><path d="M0 1.700h18M0 7.200h18M0 12.500h18" stroke="#343c43" strokeWidth="2.800" /></svg><Fit w={187} className="ml-2">Navegación por el</Fit></span>
        <Fit w={129}>cuestionario</Fit>
      </h2>
      <div className="mt-[13px] ml-[5px] flex gap-[5px]">
        {[1, 2, 3, 4].map((n) => (
          <div key={n} className={`flex h-[45px] w-[35px] flex-col overflow-hidden rounded-[4px] text-center text-[#4d626e] ${n === 3 ? "border-[3px] border-[#1b4f69]" : "border border-[#999]"}`}>
            <div className={`bg-[#ededed] ${n === 3 ? "h-[22px] leading-[20px]" : "h-6 leading-6"}`}>{n}</div>
            <div className="flex-1 bg-[#999]" />
          </div>
        ))}
      </div>
      <div className="mt-[11px] ml-[5px] leading-6 text-[#63747d]"><Fit w={125}>Terminar intento…</Fit></div>
      <div className="mt-[10px] ml-[5px] leading-6 whitespace-pre"><Fit w={114}>Tiempo restante </Fit><Fit w={51} className="text-[#222]">0:04:06</Fit></div>
    </aside>
  );
}

export default function App() {
  return (
    <div className="flex h-[900px] w-[1440px] flex-col overflow-hidden bg-white font-['Open_Sans','Noto_Sans',sans-serif]">
      <TopBar />
      <div className="flex min-h-0 flex-1">
        <Dock />
        <div className="relative flex min-w-0 flex-1 flex-col">
          <div className="flex shrink-0 flex-col font-['Noto_Sans',sans-serif]"><Tabs /><NavBar /></div>
          <Banner />
          <div className="flex min-h-0 flex-1 overflow-hidden pl-[19px]">
            <Main />
            <Sidebar />
          </div>
          <span className="absolute top-[163px] right-px h-[480px] w-[3px] rounded-full bg-[#6a6a6a]" />
          <div className="absolute top-[755px] right-[3px] flex h-8 w-[34px] items-center justify-center rounded bg-[#b4b4b4]"><svg width="10" height="6" viewBox="0 0 10 6"><path d="M.7 5.300L5 1l4.300 4.300" stroke="#fff" strokeWidth="1.300" fill="none" /></svg></div>
        </div>
      </div>
    </div>
  );
}
